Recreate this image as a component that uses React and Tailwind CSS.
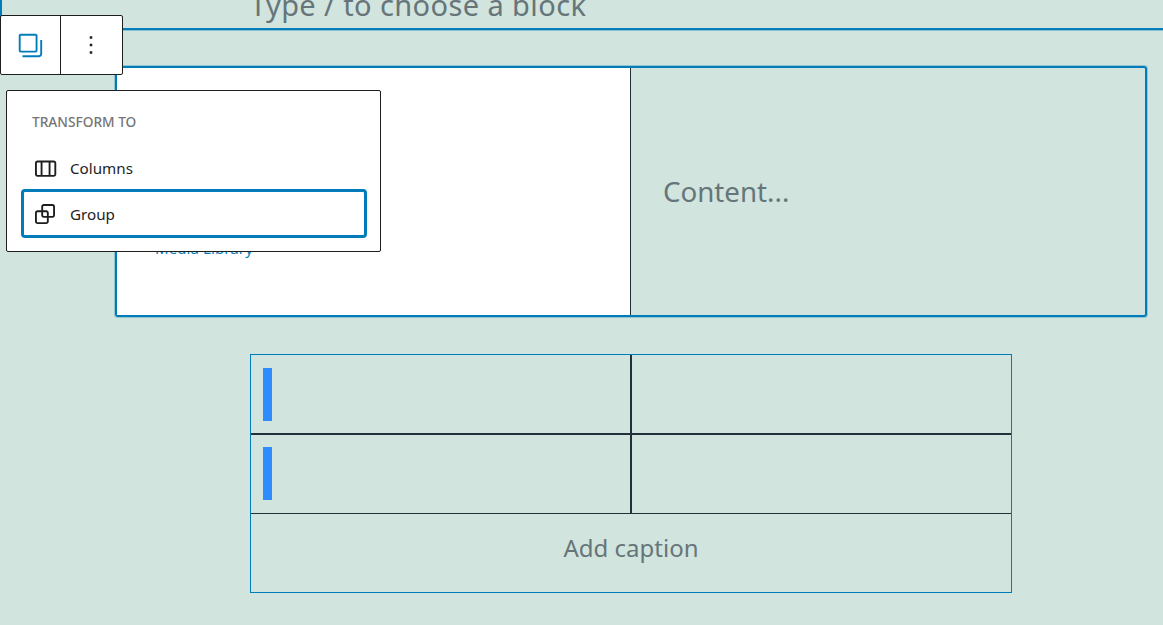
const FONT = { fontFamily: '"Noto Sans", "Open Sans", sans-serif' };

function StackIcon() {
  return (
    <svg width="30" height="30" viewBox="0 0 24 24" fill="#007cba" className="mr-[2px]">
      <path d="M20.2 8v11c0 .7-.6 1.2-1.2 1.2H6v1.5h13c1.5 0 2.7-1.2 2.7-2.8V8zM18 16.4V4.6c0-.9-.7-1.6-1.6-1.6H4.6C3.7 3 3 3.7 3 4.6v11.8c0 .9.7 1.6 1.6 1.6h11.8c.9 0 1.6-.7 1.6-1.6zM4.5 4.6c0-.1 0-.1.1-.1h11.8c.1 0 .1 0 .1.1V16.4c0 .1 0 .1-.1.1H4.6c-.1 0-.1 0-.1-.1V4.6z" />
    </svg>
  );
}

function MoreIcon() {
  return (
    <svg width="30" height="30" viewBox="0 0 24 24" fill="#1e1e1e" className="mr-[1px]">
      <path d="M13 19h-2v-2h2v2zm0-6h-2v-2h2v2zm0-6h-2V5h2v2z" />
    </svg>
  );
}

function ColumnsIcon() {
  return (
    <svg width="30" height="30" viewBox="0 0 24 24" fill="#1e1e1e" className="shrink-0">
      <path d="M19 6H6c-1.1 0-2 .9-2 2v9c0 1.1.9 2 2 2h13c1.1 0 2-.9 2-2V8c0-1.1-.9-2-2-2zm-4.1 1.5v10H10v-10h4.9zM5.5 17V8c0-.3.2-.5.5-.5h2.5v10H6c-.3 0-.5-.2-.5-.5zm14 0c0 .3-.2.5-.5.5h-2.6v-10H19c.3 0 .5.2.5.5v9z" />
    </svg>
  );
}

function GroupIcon() {
  return (
    <svg width="30" height="30" viewBox="0 0 24 24" fill="#1e1e1e" className="shrink-0">
      <path d="M18 4h-7c-1.1 0-2 .9-2 2v3H6c-1.1 0-2 .9-2 2v7c0 1.1.9 2 2 2h7c1.1 0 2-.9 2-2v-3h3c1.1 0 2-.9 2-2V6c0-1.1-.9-2-2-2zm-4.5 14c0 .3-.2.5-.5.5H6c-.3 0-.5-.2-.5-.5v-7c0-.3.2-.5.5-.5h3V13c0 1.1.9 2 2 2h2.5v3zm0-4.5H11c-.3 0-.5-.2-.5-.5v-2.5H13c.3 0 .5.2.5.5v2.5zm5-.5c0 .3-.2.5-.5.5h-3V11c0-1.1-.9-2-2-2h-2.5V6c0-.3.2-.5.5-.5h7c.3 0 .5.2.5.5v7z" />
    </svg>
  );
}

export default function App() {
  return (
    <div className="relative h-[625px] overflow-hidden bg-[#d1e4dd]" style={FONT}>
      <div className="h-[30px] border-l-2 border-b-2 border-[#007cba] shadow-[0_1px_0_rgba(0,124,186,0.35)] pl-[248px] flex items-end">
        <div className="text-[29px] tracking-[0.4px] leading-[40px] mb-[3px] text-[#66757a] whitespace-nowrap">Type / to choose a block</div>
      </div>

      <div className="ml-[115px] mt-[36px] w-[1032px] h-[251px] border-2 border-[#007cba] rounded-[3px] shadow-[0_0_0_1px_rgba(0,124,186,0.3)] flex">
        <div className="w-[514px] bg-white border-r border-[#23303a] pl-[38px] pt-[170px]">
          <div className="text-[15px] leading-[20px] tracking-[0.1px] text-[#007cba]">Media Library</div>
        </div>
        <div className="flex-1 flex items-center pl-[32px]">
          <div className="text-[27.7px] text-[#66757a]">Content...</div>
        </div>
      </div>

      <div className="ml-[250px] mt-[37px] w-[762px] h-[239px] border border-[#007cba]">
        <div className="grid grid-cols-[381px_1fr]">
          <div className="h-[80px] pt-[13px] pl-[12px] border-r-2 border-b-2 border-[#23303a]">
            <div className="w-[9px] h-[53px] bg-[#2f8cff]" />
          </div>
          <div className="h-[80px] border-b-2 border-[#23303a]" />
          <div className="h-[78px] pt-[12px] pl-[12px] border-r-2 border-[#23303a]">
            <div className="w-[9px] h-[53px] bg-[#2f8cff]" />
          </div>
          <div className="h-[78px]" />
        </div>
        <div className="h-[79px] pb-[10px] border-t border-[#23303a] flex items-center justify-center text-[24px] text-[#66757a]">Add caption</div>
      </div>

      <div className="absolute left-0 top-[15px] w-[123px] h-[60px] bg-white border border-[#1e1e1e] rounded-[2px] flex">
        <div className="w-[60px] border-r border-[#1e1e1e] flex items-center justify-center">
          <StackIcon />
        </div>
        <div className="flex-1 flex items-center justify-center">
          <MoreIcon />
        </div>
      </div>

      <div className="absolute left-[6px] top-[90px] w-[375px] h-[162px] bg-white border border-[#1e1e1e] rounded-[2px] pt-[21px] pl-[14px] pr-[13px]">
        <div className="pl-[11px] text-[13.7px] leading-[20px] font-medium text-[#757575] mb-[15px]">TRANSFORM TO</div>
        <div className="h-[42px] pl-[9px] flex items-center gap-[10px] text-[15.2px] text-[#1e1e1e]">
          <ColumnsIcon />
          <span className="mt-[1px]">Columns</span>
        </div>
        <div className="h-[49px] pl-[6px] border-[3px] border-[#007cba] rounded-[4px] flex items-center gap-[10px] text-[15.2px] text-[#1e1e1e]">
          <GroupIcon />
          <span className="mt-[1px]">Group</span>
        </div>
      </div>
    </div>
  );
}
